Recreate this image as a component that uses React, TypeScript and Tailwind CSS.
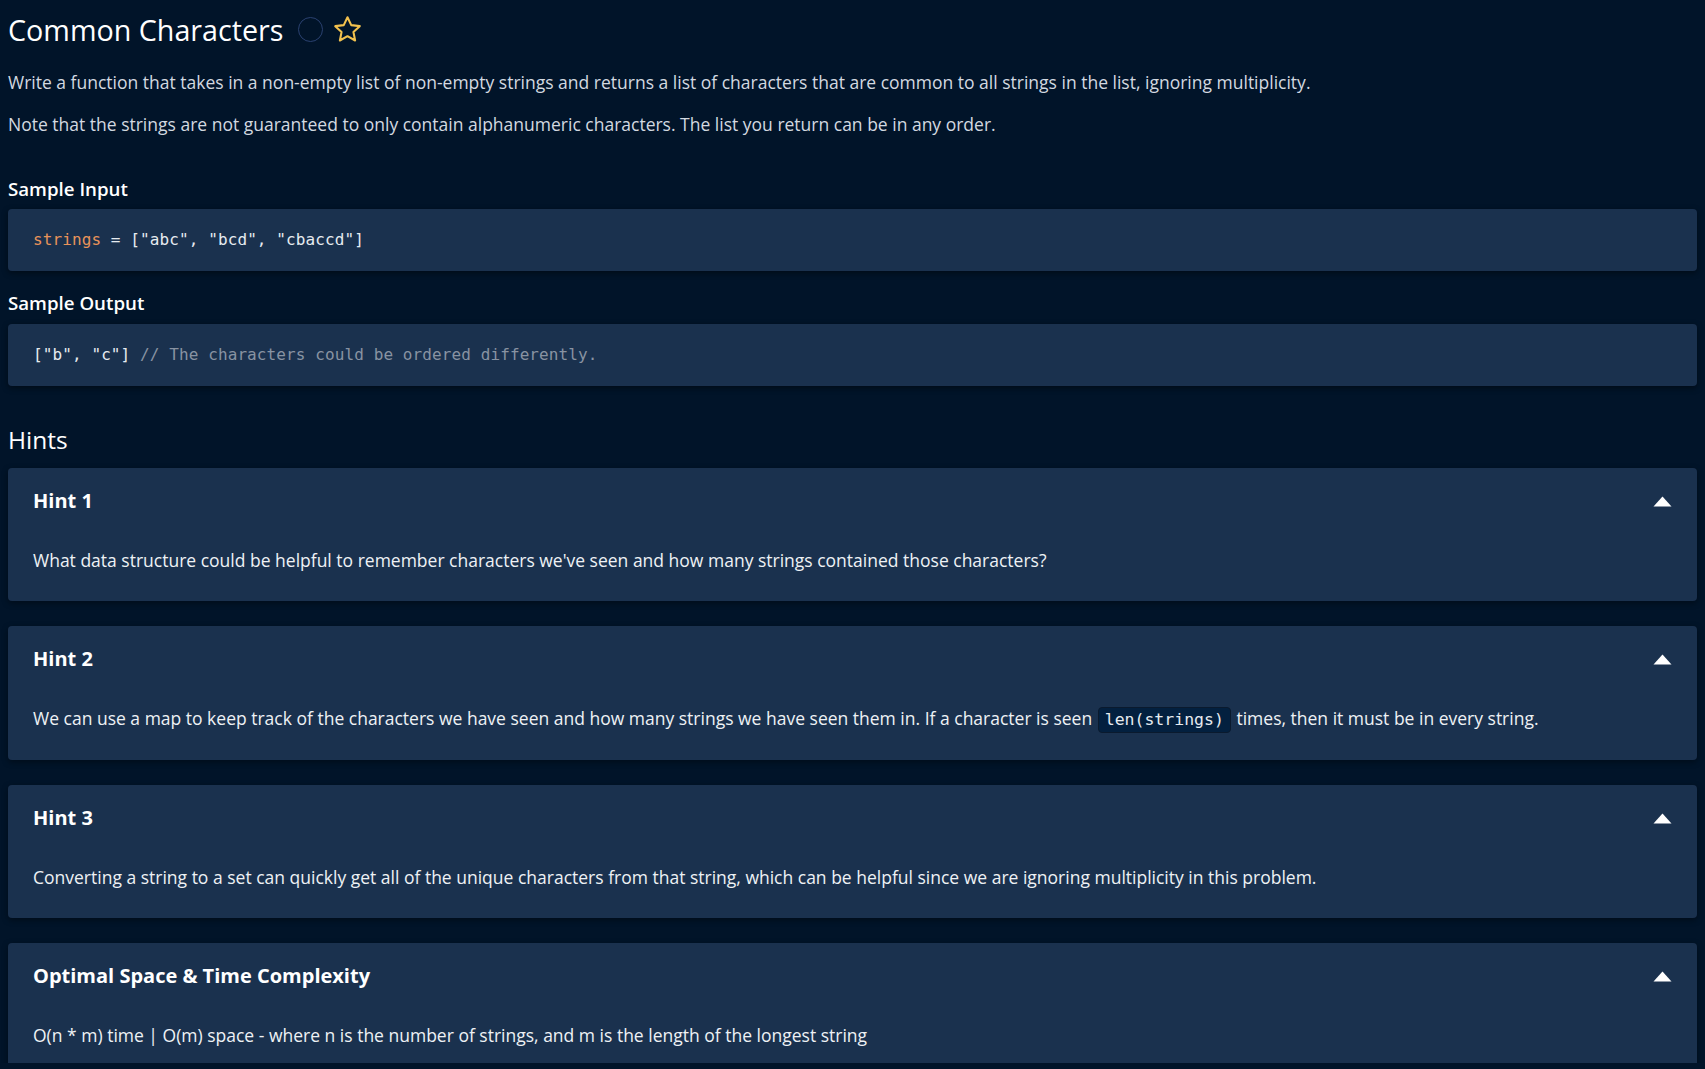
import React from 'react'

interface Hint {
  title: string
  body: React.ReactNode
}

const hints: Hint[] = [
  {
    title: 'Hint 1',
    body: "What data structure could be helpful to remember characters we've seen and how many strings contained those characters?",
  },
  {
    title: 'Hint 2',
    body: (
      <>
        We can use a map to keep track of the characters we have seen and how many strings we have seen them in. If a character is seen{' '}
        <code className="mx-[1px] inline-block rounded-[4px] border border-[#0a1a2e] bg-[#03203f] px-[6px] py-0 align-middle font-['DejaVu_Sans_Mono',monospace] text-[16.5px] leading-[24px] text-[#e6ebf0]">
          len(strings)
        </code>{' '}
        times, then it must be in every string.
      </>
    ),
  },
  {
    title: 'Hint 3',
    body: 'Converting a string to a set can quickly get all of the unique characters from that string, which can be helpful since we are ignoring multiplicity in this problem.',
  },
  {
    title: 'Optimal Space & Time Complexity',
    body: 'O(n * m) time | O(m) space - where n is the number of strings, and m is the length of the longest string',
  },
]

function ArrowUp() {
  return (
    <svg width="19" height="11" viewBox="0 0 19 11" className="shrink-0">
      <path d="M9.5 0.5 L18.5 10.5 L0.5 10.5 Z" fill="#ffffff" />
    </svg>
  )
}

function Star() {
  return (
    <svg width="31" height="31" viewBox="0 0 24 24" fill="none" stroke="#f2c14e" strokeWidth="1.6" strokeLinejoin="round">
      <path d="M12 2.5 L14.9 8.6 L21.5 9.4 L16.6 13.9 L17.9 20.5 L12 17.2 L6.1 20.5 L7.4 13.9 L2.5 9.4 L9.1 8.6 Z" />
    </svg>
  )
}

function CodeBlock({ children }: { children: React.ReactNode }) {
  return (
    <div className="flex h-[62px] items-center rounded-[4px] bg-[#1a314e] px-[25px] shadow-[0_2px_6px_rgba(0,0,0,0.45)]">
      <pre className="font-['DejaVu_Sans_Mono',monospace] text-[16px] leading-[20px] tracking-[0.1px] text-[#e6ebf0]">{children}</pre>
    </div>
  )
}

function HintCard({ hint }: { hint: Hint }) {
  return (
    <div className="shrink-0 rounded-[4px] bg-[#1a314e] pb-[27px] pl-[25px] pr-[25px] pt-[21px] shadow-[0_2px_6px_rgba(0,0,0,0.4)]">
      <div className="flex h-[24px] items-center justify-between">
        <h3 className="text-[20px] font-bold leading-[24px] text-white">{hint.title}</h3>
        <ArrowUp />
      </div>
      <p className="mt-[33px] text-[17.5px] leading-[28px] text-[#eef1f5]">{hint.body}</p>
    </div>
  )
}

export default function App() {
  return (
    <div className="h-[1069px] w-full bg-[#011429] font-['Open_Sans',sans-serif]">
      <div className="flex h-[1063px] flex-col overflow-hidden px-[8px]">
        <div className="flex h-[47px] items-center pt-[12px]">
          <h1 className="text-[28.7px] leading-[40px] text-white">Common Characters</h1>
          <span className="ml-[14px] h-[25px] w-[25px] rounded-full border-[1.5px] border-[#2a4170]" />
          <span className="ml-[9px] flex h-[31px] w-[31px] items-center justify-center">
            <Star />
          </span>
        </div>

        <p className="mt-[21px] text-[17.5px] leading-[28px] text-[#d3d9e0]">
          Write a function that takes in a non-empty list of non-empty strings and returns a list of characters that are common to all strings in the list, ignoring multiplicity.
        </p>
        <p className="mt-[14px] text-[17.5px] leading-[28px] text-[#d3d9e0]">
          Note that the strings are not guaranteed to only contain alphanumeric characters. The list you return can be in any order.
        </p>

        <h2 className="mt-[38px] text-[18.7px] font-semibold leading-[26px] text-white">Sample Input</h2>
        <div className="mt-[7px]">
          <CodeBlock>
            <span className="text-[#e8935a]">strings</span> = [&quot;abc&quot;, &quot;bcd&quot;, &quot;cbaccd&quot;]
          </CodeBlock>
        </div>

        <h2 className="mt-[19px] text-[18.7px] font-semibold leading-[26px] text-white">Sample Output</h2>
        <div className="mt-[8px]">
          <CodeBlock>
            [&quot;b&quot;, &quot;c&quot;] <span className="text-[#8893a2]">// The characters could be ordered differently.</span>
          </CodeBlock>
        </div>

        <h2 className="mt-[37px] text-[24.5px] leading-[34px] text-white">Hints</h2>

        <div className="mt-[11px] flex flex-col gap-[25px]">
          {hints.map((hint) => (
            <HintCard key={hint.title} hint={hint} />
          ))}
        </div>
      </div>
    </div>
  )
}
